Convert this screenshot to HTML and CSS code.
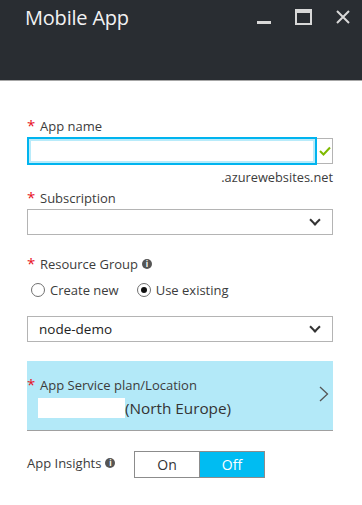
FILE: index.html
```html
<!DOCTYPE html>
<html lang="en">
<head>
    <meta charset="UTF-8">
    <meta name="viewport" content="width=device-width, initial-scale=1.0">
    <title>Mobile App</title>
    <link rel="stylesheet" href="styles.css">
</head>
<body>

    <div class="blade-header">
        <h1>Mobile App</h1>
        <div class="blade-controls">
            <span class="ctl-min"></span>
            <span class="ctl-max"></span>
            <svg class="ctl-close" width="14" height="14" viewBox="0 0 14 14">
                <path d="M1 1 L13 13 M13 1 L1 13" stroke="#d8d8d8" stroke-width="2"/>
            </svg>
        </div>
    </div>

    <div class="blade-content">
        <div class="field-label"><span class="req">*</span>App name</div>
        <div class="name-row">
            <div class="name-input"></div>
            <div class="name-check">
                <svg width="12" height="10" viewBox="0 0 12 10">
                    <path d="M1 5 L4.5 8.5 L11 1.5" stroke="#7fba00" stroke-width="2" fill="none"/>
                </svg>
            </div>
        </div>
        <div class="suffix">.azurewebsites.net</div>

        <div class="field-label label-sub"><span class="req">*</span>Subscription</div>
        <div class="select"><span></span><span class="chevron"></span></div>

        <div class="field-label label-rg"><span class="req">*</span>Resource Group <span class="info">i</span></div>
        <div class="radios">
            <label class="radio"><span class="dot"></span>Create new</label>
            <label class="radio checked"><span class="dot"></span>Use existing</label>
        </div>
        <div class="select select-rg"><span>node-demo</span><span class="chevron"></span></div>

        <div class="plan">
            <div class="plan-text">
                <div class="field-label"><span class="req">*</span>App Service plan/Location</div>
                <div class="plan-value"><span class="hidden-name"></span>(North Europe)</div>
            </div>
            <svg class="plan-arrow" width="10" height="16" viewBox="0 0 10 16">
                <path d="M1 1 L8.5 8 L1 15" stroke="#555" stroke-width="1.3" fill="none"/>
            </svg>
        </div>

        <div class="insights">
            <span class="insights-label">App Insights <span class="info">i</span></span>
            <div class="toggle">
                <span>On</span>
                <span class="active">Off</span>
            </div>
        </div>
    </div>

</body>
</html>
```

FILE: styles.css
```css
body {
    margin: 0;
    font-family: "Open Sans", "Noto Sans", Arial, sans-serif;
    background-color: #fff;
    color: #3c3c3c;
}
.blade-header {
    height: 80px;
    background-color: #292d32;
    border-bottom: 1px solid #a6a6a6;
    display: flex;
    align-items: flex-start;
    justify-content: space-between;
    padding: 0 12px 0 25px;
}
.blade-header h1 {
    margin: 4px 0 0 0;
    font-size: 20px;
    font-weight: 400;
    color: #f2f2f2;
    letter-spacing: -0.2px;
}
.blade-controls {
    display: flex;
    align-items: flex-start;
    padding-top: 9px;
}
.ctl-min {
    width: 14px;
    height: 3px;
    background-color: #d8d8d8;
    margin: 12px 24px 0 0;
}
.ctl-max {
    width: 13px;
    height: 10px;
    border: 2px solid #d8d8d8;
    border-top-width: 4px;
    margin-right: 24px;
}
.ctl-close {
    margin-top: 1px;
}
.blade-content {
    padding: 36px 29px 0 27px;
}
.field-label {
    font-size: 13px;
    line-height: 18px;
    color: #3c3c3c;
    display: flex;
    align-items: center;
}
.req {
    color: #e81123;
    width: 13px;
    font-size: 15px;
    align-self: flex-start;
    line-height: 16px;
}
.name-row {
    display: flex;
    align-items: center;
    margin-top: 2px;
}
.name-input {
    flex: 1;
    height: 24px;
    border: 2px solid #00b4ef;
    box-shadow: inset 0 0 0 2px #b8ebfa;
    background-color: #fff;
}
.name-check {
    width: 15px;
    height: 24px;
    border: 1px solid #b4b4b4;
    border-left: none;
    display: flex;
    align-items: center;
    justify-content: center;
}
.suffix {
    text-align: right;
    font-size: 12.8px;
    line-height: 18px;
    margin-top: 3px;
    color: #3c3c3c;
}
.label-sub {
    margin-top: 3px;
}
.select {
    margin-top: 2px;
    height: 24px;
    border: 1px solid #b4b4b4;
    display: flex;
    align-items: center;
    justify-content: space-between;
    padding: 0 11px;
    font-size: 13.5px;
    color: #222;
}
.chevron {
    width: 6px;
    height: 6px;
    border-right: 2px solid #333;
    border-bottom: 2px solid #333;
    transform: rotate(45deg);
    margin: 0 2px 4px 0;
}
.label-rg {
    margin-top: 20px;
}
.info {
    display: inline-flex;
    align-items: center;
    justify-content: center;
    width: 10px;
    height: 10px;
    border-radius: 50%;
    background-color: #555;
    color: #fff;
    font-size: 8px;
    font-weight: 700;
    margin-left: 4px;
    line-height: 10px;
}
.radios {
    display: flex;
    gap: 18px;
    margin-top: 8px;
    padding-left: 4px;
    font-size: 13px;
    line-height: 18px;
    color: #3c3c3c;
}
.radio {
    display: flex;
    align-items: center;
}
.dot {
    width: 12px;
    height: 12px;
    border: 1px solid #707070;
    border-radius: 50%;
    margin-right: 5px;
    position: relative;
}
.radio.checked .dot::after {
    content: "";
    position: absolute;
    left: 3px;
    top: 3px;
    width: 6px;
    height: 6px;
    border-radius: 50%;
    background-color: #111;
}
.select-rg {
    margin-top: 17px;
}
.plan {
    margin-top: 19px;
    height: 69px;
    background-color: #b3e9f8;
    border-bottom: 1px solid #a0a0a0;
    display: flex;
    align-items: center;
    justify-content: space-between;
    padding-right: 4px;
}
.plan-text {
    margin-top: 3px;
}
.plan-value {
    display: flex;
    align-items: center;
    margin: 4px 0 0 11px;
    font-size: 15.3px;
    color: #333;
    line-height: 20px;
}
.hidden-name {
    width: 87px;
    height: 20px;
    background-color: #fff;
}
.plan-arrow {
    margin-bottom: 4px;
}
.insights {
    display: flex;
    align-items: center;
    margin-top: 20px;
}
.insights-label {
    font-size: 13px;
    color: #3c3c3c;
    width: 107px;
    display: flex;
    align-items: center;
    margin-bottom: 4px;
}
.toggle {
    display: flex;
    border: 1px solid #8c8c8c;
}
.toggle span {
    width: 64px;
    height: 25px;
    display: flex;
    align-items: center;
    justify-content: center;
    font-size: 14px;
    color: #333;
}
.toggle span.active {
    background-color: #00bcf2;
    color: #fff;
    border-left: 1px solid #8c8c8c;
}
```
